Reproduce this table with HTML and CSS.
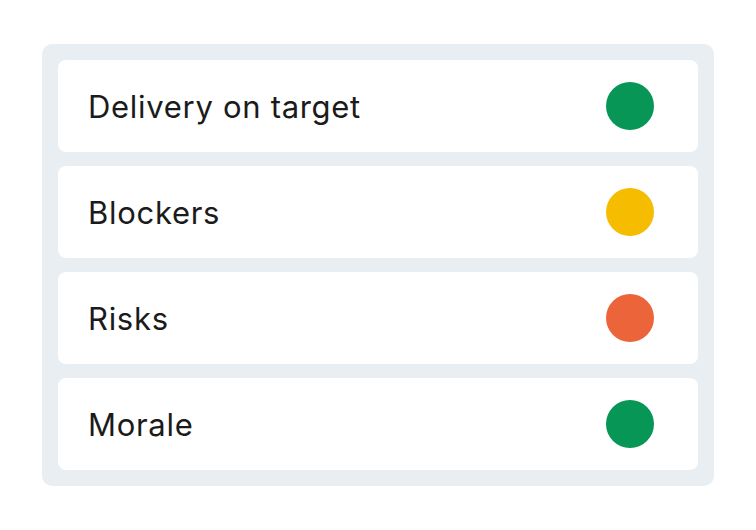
FILE: index.html
```html
<!DOCTYPE html>
<html>
<head>
<meta charset="utf-8">
<link rel="stylesheet" href="styles.css">
</head>
<body>
<div class="panel">
  <div class="row"><span class="label">Delivery on target</span><span class="dot green"></span></div>
  <div class="row"><span class="label">Blockers</span><span class="dot yellow"></span></div>
  <div class="row"><span class="label">Risks</span><span class="dot red"></span></div>
  <div class="row"><span class="label">Morale</span><span class="dot green"></span></div>
</div>
</body>
</html>
```
FILE: styles.css
```css
html, body {
  margin: 0;
  padding: 0;
  background: #ffffff;
}
body {
  padding: 44px 42px;
  font-family: Inter, "Noto Sans", sans-serif;
}
.panel {
  width: 672px;
  box-sizing: border-box;
  background: #e8eef2;
  border-radius: 10px;
  padding: 16px;
  display: flex;
  flex-direction: column;
  gap: 14px;
}
.row {
  height: 92px;
  background: #ffffff;
  border-radius: 8px;
  display: flex;
  align-items: center;
  justify-content: space-between;
  padding: 0 44px 0 30px;
}
.label {
  font-size: 31px;
  letter-spacing: 0.7px;
  color: #1b1b1b;
}
.dot {
  width: 48px;
  height: 48px;
  border-radius: 50%;
}
.green { background: #079656; }
.yellow { background: #f6bc00; }
.red { background: #ec643a; }
```
